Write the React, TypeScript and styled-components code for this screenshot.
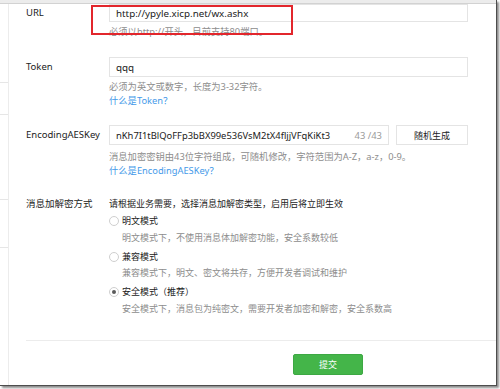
import React from "react";
import styled, { createGlobalStyle } from "styled-components";

const GlobalStyle = createGlobalStyle`
    html, body {
        margin: 0;
        padding: 0;
        background: #ffffff;
    }
    body {
        width: 500px;
        height: 389px;
        overflow: hidden;
        font-family: "Noto Sans", "Noto Sans CJK SC", sans-serif;
        font-size: 9px;
        color: #222222;
    }
`;

const Frame = styled.div`
    position: relative;
    width: 496px;
    height: 385px;
    background: #ffffff;
    border-right: 1px solid #4d4d4d;
    border-bottom: 1px solid #4d4d4d;
    box-shadow: 2px 2px 2px rgba(0, 0, 0, 0.45);
    display: flex;
    flex-direction: column;
    overflow: hidden;
`;

const TopBar = styled.div`
    height: 3px;
    flex-shrink: 0;
    background: #ececec;
    border-bottom: 1px solid #d2d2d2;
`;

const Body = styled.div`
    flex: 1;
    display: flex;
`;

const Sidebar = styled.div`
    width: 8px;
    flex-shrink: 0;
    border-right: 1px solid #ececec;
    display: flex;
    flex-direction: column;
`;

const SideItem = styled.div<{ $h: number }>`
    height: ${(p) => p.$h}px;
    border-bottom: 1px solid #e6e6e6;
`;

const Main = styled.div`
    flex: 1;
    display: flex;
    flex-direction: column;
    padding-left: 17px;
`;

const Form = styled.div`
    display: flex;
    flex-direction: column;
`;

const Row = styled.div<{ $mt: number }>`
    display: grid;
    grid-template-columns: 83px 359px;
    margin-top: ${(p) => p.$mt}px;
`;

const Label = styled.div<{ $lh: number }>`
    line-height: ${(p) => p.$lh}px;
    font-size: 9.5px;
    color: #222222;
    white-space: nowrap;
`;

const Control = styled.div`
    display: flex;
    flex-direction: column;
`;

const InputLine = styled.div`
    display: flex;
    gap: 7px;
`;

const Input = styled.div<{ $h: number; $w?: number; $fs?: number }>`
    box-sizing: border-box;
    height: ${(p) => p.$h}px;
    width: ${(p) => (p.$w ? `${p.$w}px` : "100%")};
    border: 1px solid #e4e4e4;
    background: #ffffff;
    padding: 0 6px;
    display: flex;
    align-items: center;
    justify-content: space-between;
    font-size: ${(p) => p.$fs ?? 9.8}px;
    color: #222222;
    white-space: nowrap;
`;

const Counter = styled.span`
    color: #9a9a9a;
`;

const PlainButton = styled.div`
    box-sizing: border-box;
    width: 72px;
    height: 20px;
    border: 1px solid #e4e4e4;
    background: #ffffff;
    display: flex;
    align-items: center;
    justify-content: center;
    color: #222222;
`;

const Hint = styled.div<{ $mt?: number }>`
    margin-top: ${(p) => p.$mt ?? 0}px;
    line-height: 14px;
    font-size: 9.3px;
    color: #8d8d8d;
    white-space: nowrap;
`;

const HelpLink = styled.a`
    line-height: 14px;
    font-size: 9.3px;
    color: #459ae9;
    text-decoration: none;
`;

const Intro = styled.div`
    line-height: 14px;
    color: #222222;
    white-space: nowrap;
`;

const Option = styled.label<{ $mt: number }>`
    margin-top: ${(p) => p.$mt}px;
    display: flex;
    align-items: center;
    gap: 3px;
    line-height: 14px;
    color: #222222;
`;

const Radio = styled.span<{ $checked?: boolean }>`
    box-sizing: border-box;
    width: 10px;
    height: 10px;
    border-radius: 50%;
    border: 1px solid #cfcfcf;
    background: #ffffff;
    display: flex;
    align-items: center;
    justify-content: center;
    &::after {
        content: "";
        width: 4px;
        height: 4px;
        border-radius: 50%;
        background: ${(p) => (p.$checked ? "#5a5a5a" : "transparent")};
    }
`;

const OptionDesc = styled.div`
    margin-top: 2.5px;
    padding-left: 13px;
    line-height: 14px;
    color: #8d8d8d;
    white-space: nowrap;
`;

const Footer = styled.div`
    margin-top: 24px;
    border-top: 1px solid #ececec;
    padding: 13px 0 0 267px;
`;

const SubmitButton = styled.button`
    box-sizing: border-box;
    width: 70px;
    height: 21px;
    border: 1px solid #3da843;
    border-radius: 2px;
    background: #44b549;
    color: #ffffff;
    font-family: inherit;
    font-size: 9px;
    padding: 0;
`;

const Annotation = styled.div`
    position: absolute;
    left: 91px;
    top: 5px;
    width: 202px;
    height: 30px;
    box-sizing: border-box;
    border: 2px solid #e2262c;
    pointer-events: none;
`;

const options = [
    { title: "明文模式", desc: "明文模式下，不使用消息体加解密功能，安全系数较低", checked: false },
    { title: "兼容模式", desc: "兼容模式下，明文、密文将共存，方便开发者调试和维护", checked: false },
    { title: "安全模式（推荐）", desc: "安全模式下，消息包为纯密文，需要开发者加密和解密，安全系数高", checked: true },
];

const App = () => {
    return (
        <>
            <GlobalStyle />
            <Frame>
                <TopBar />
                <Body>
                    <Sidebar>
                        <SideItem $h={78} />
                        <SideItem $h={31} />
                        <SideItem $h={84} />
                        <SideItem $h={47} />
                    </Sidebar>
                    <Main>
                        <Form>
                            <Row $mt={0}>
                                <Label $lh={18}>URL</Label>
                                <Control>
                                    <Input $h={18}>http://ypyle.xicp.net/wx.ashx</Input>
                                    <Hint $mt={3}>必须以http://开头，目前支持80端口。</Hint>
                                </Control>
                            </Row>
                            <Row $mt={18}>
                                <Label $lh={20}>Token</Label>
                                <Control>
                                    <Input $h={20}>qqq</Input>
                                    <Hint $mt={3}>必须为英文或数字，长度为3-32字符。</Hint>
                                    <HelpLink href="#">什么是Token？</HelpLink>
                                </Control>
                            </Row>
                            <Row $mt={17}>
                                <Label $lh={20}>EncodingAESKey</Label>
                                <Control>
                                    <InputLine>
                                        <Input $h={20} $w={280} $fs={9.4}>
                                            <span>nKh7I1tBlQoFFp3bBX99e536VsM2tX4fljjVFqKiKt3</span>
                                            <Counter>43 /43</Counter>
                                        </Input>
                                        <PlainButton>随机生成</PlainButton>
                                    </InputLine>
                                    <Hint $mt={5}>
                                        消息加密密钥由43位字符组成，可随机修改，字符范围为A-Z，a-z，0-9。
                                    </Hint>
                                    <HelpLink href="#">什么是EncodingAESKey？</HelpLink>
                                </Control>
                            </Row>
                            <Row $mt={19}>
                                <Label $lh={14}>消息加解密方式</Label>
                                <Control>
                                    <Intro>请根据业务需要，选择消息加解密类型，启用后将立即生效</Intro>
                                    {options.map((o, i) => (
                                        <React.Fragment key={o.title}>
                                            <Option $mt={i === 0 ? 3 : 5}>
                                                <Radio $checked={o.checked} />
                                                {o.title}
                                            </Option>
                                            <OptionDesc>{o.desc}</OptionDesc>
                                        </React.Fragment>
                                    ))}
                                </Control>
                            </Row>
                        </Form>
                        <Footer>
                            <SubmitButton>提交</SubmitButton>
                        </Footer>
                    </Main>
                </Body>
                <Annotation />
            </Frame>
        </>
    );
};

export default App;
